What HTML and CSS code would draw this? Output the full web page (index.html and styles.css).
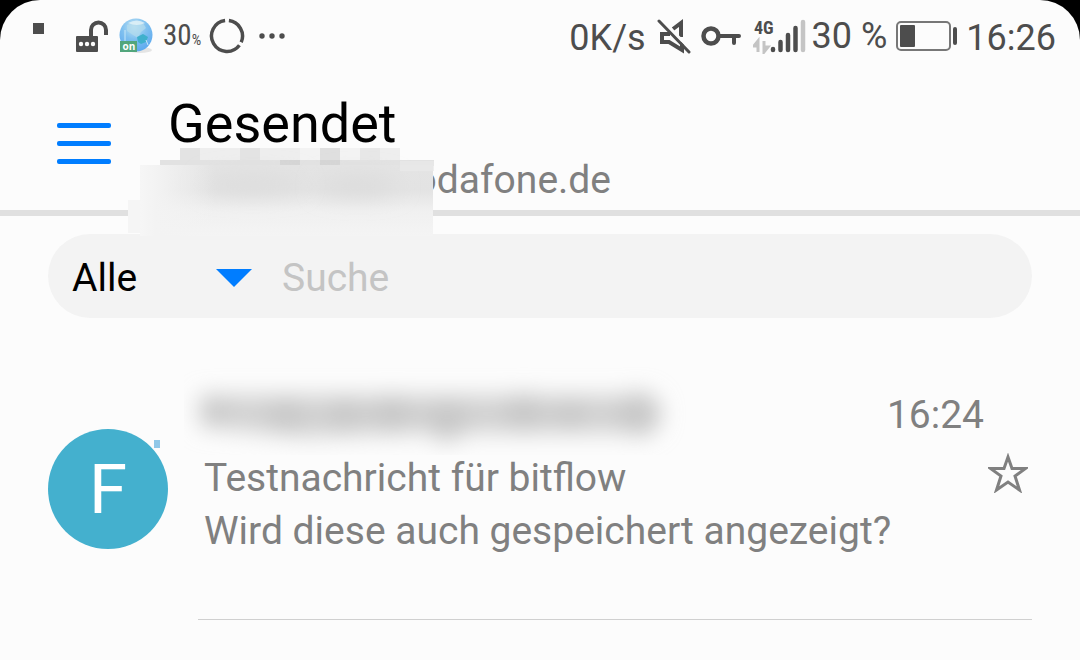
FILE: index.html
```html
<!DOCTYPE html>
<html lang="de">
<head>
    <meta charset="UTF-8">
    <meta name="viewport" content="width=device-width, initial-scale=1.0">
    <title>Gesendet</title>
    <link rel="stylesheet" href="styles.css">
</head>
<body>
    <div class="screen">
        <!-- Status bar -->
        <div class="status-bar">
            <div class="status-left">
                <span class="notice"></span>
                <svg class="lock" width="34" height="32" viewBox="0 0 34 32">
                    <path d="M16 16V10a7.500 7.500 0 0 1 15 0v5" fill="none" stroke="#4d4d4d" stroke-width="4"/>
                    <rect x="1" y="16" width="22" height="16" rx="1" fill="#4d4d4d"/>
                    <circle cx="6" cy="24" r="2.200" fill="#fcfcfc"/>
                    <circle cx="12" cy="24" r="2.200" fill="#fcfcfc"/>
                    <circle cx="18" cy="24" r="2.200" fill="#fcfcfc"/>
                </svg>
                <svg class="globe" width="36" height="36" viewBox="0 0 36 36">
                    <defs>
                        <radialGradient id="ball" cx="45%" cy="25%" r="75%">
                            <stop offset="0" stop-color="#c3e5f5"/>
                            <stop offset="0.500" stop-color="#7fc0ef"/>
                            <stop offset="1" stop-color="#5da9f0"/>
                        </radialGradient>
                    </defs>
                    <ellipse cx="21" cy="32" rx="12" ry="3" fill="#e4e4e4"/>
                    <circle cx="17" cy="17" r="16.500" fill="url(#ball)"/>
                    <path d="M8 7l7-3 9 1 3 5-5 4-3 6-5-3-6-4z" fill="#b4dced" opacity="0.700"/>
                    <path d="M18 19l6-3 5 3-2 5-5 2-3-2z" fill="#3fb0cc"/>
                    <path d="M9 5q9-5 17 0-8 4-17 0z" fill="#e4f3f8" opacity="0.800"/>
                    <path d="M6 12v11M27 22l2 5" stroke="#c7e7f8" fill="none"/>
                    <rect x="1" y="23" width="17" height="11" fill="#52a67c"/>
                    <text x="10" y="32" text-anchor="middle" class="globe-text">on</text>
                </svg>
                <span class="usage">30<small>%</small></span>
                <svg class="ring" width="36" height="36" viewBox="0 0 36 36" fill="none" stroke="#4d4d4d" stroke-width="3.500">
                    <path d="M19.900 2.600A15.500 15.500 0 0 1 32.200 24.200"/>
                    <path d="M30.400 27.300A15.500 15.500 0 1 1 16.100 2.600"/>
                </svg>
                <svg class="more" width="26" height="6" viewBox="0 0 26 6" fill="#4d4d4d">
                    <circle cx="3" cy="3" r="2.700"/>
                    <circle cx="13" cy="3" r="2.700"/>
                    <circle cx="23" cy="3" r="2.700"/>
                </svg>
            </div>
            <div class="status-right">
                <span class="speed">0K/s</span>
                <svg class="mute" width="34" height="36" viewBox="0 0 34 36" fill="none" stroke="#4d4d4d" stroke-width="4">
                    <path d="M13 16H5v8h7l13 8v-8"/>
                    <path d="M16 11l8-6v14"/>
                    <path d="M5 2l29 30" stroke="#fcfcfc" stroke-width="3"/>
                    <path d="M2 3l30 31" stroke-linecap="round" stroke-width="3"/>
                </svg>
                <svg class="key" width="40" height="22" viewBox="0 0 40 22" fill="none" stroke="#4d4d4d" stroke-width="4">
                    <circle cx="10" cy="11" r="7.500" stroke-width="4.500"/>
                    <path d="M18 11h20M33 11v7" stroke-linecap="round"/>
                </svg>
                <svg class="signal" width="53" height="36" viewBox="0 0 53 36">
                    <text x="1" y="16" class="signal-text">4G</text>
                    <path d="M5 34V23L1 28h5M11 23v11l4-5h-5" fill="none" stroke="#c4c4c4" stroke-width="3"/>
                    <g stroke="#4d4d4d" stroke-width="4.500" stroke-linecap="round">
                        <path d="M20 31v1M27.500 24v8M35 17v15M42.500 10v22"/>
                        <path d="M50 4v28" stroke="#c4c4c4"/>
                    </g>
                </svg>
                <span class="percent">30 %</span>
                <svg class="battery" width="62" height="30" viewBox="0 0 62 30">
                    <rect x="1" y="1" width="53" height="28" rx="4" fill="none" stroke="#777" stroke-width="2"/>
                    <rect x="4" y="4" width="15" height="22" rx="1" fill="#4d4d4d"/>
                    <rect x="57" y="6" width="4" height="18" rx="2" fill="#4d4d4d"/>
                </svg>
                <span class="clock">16:26</span>
            </div>
        </div>

        <!-- Header -->
        <header class="header">
            <button class="menu" aria-label="Menü"><span></span><span></span><span></span></button>
            <div class="folder">
                <h1>Gesendet</h1>
                <p class="account">vodafone.de</p>
                <svg class="account-mask" width="306" height="88" viewBox="0 0 306 88" aria-hidden="true">
                    <defs>
                        <linearGradient id="fade" x1="0" y1="0" x2="0" y2="1">
                            <stop offset="0" stop-color="#e4e4e4"/>
                            <stop offset="0.350" stop-color="#e3e3e3"/>
                            <stop offset="0.650" stop-color="#f0f0f0"/>
                            <stop offset="1" stop-color="#f4f4f4"/>
                        </linearGradient>
                        <linearGradient id="side">
                            <stop offset="0" stop-color="#f6f6f6"/>
                            <stop offset="0.200" stop-color="#f3f3f3"/>
                            <stop offset="1" stop-color="#f3f3f3" stop-opacity="0"/>
                        </linearGradient>
                        <filter id="soft" x="-50%" y="-150%" width="200%" height="400%">
                            <feGaussianBlur stdDeviation="11"/>
                        </filter>
                    </defs>
                    <path d="M52 0h20v12H52zM112 0h20v12h-20z" fill="#e3e3e3"/>
                    <path d="M72 0h40v12H72zM132 0h40v12h-40zM252 0h20v12h-20z" fill="#eee"/>
                    <path d="M172 0h20v12h-20zM212 0h20v12h-20z" fill="#f3f3f3"/>
                    <path d="M192 0h20v12h-20z" fill="#dfdfdf"/>
                    <path d="M232 0h20v12h-20z" fill="#e7e7e7"/>
                    <rect x="32" y="12" width="274" height="6" fill="#e2e2e2"/>
                    <path d="M152 12h20v6h-20zM192 12h20v6h-20z" fill="#d5d5d5"/>
                    <rect x="0" y="52" width="12" height="33" fill="#f5f5f5"/>
                    <rect x="12" y="17" width="293" height="71" fill="url(#fade)"/>
                    <ellipse cx="125" cy="36" rx="50" ry="9" fill="#dcdcdc" filter="url(#soft)"/>
                    <ellipse cx="230" cy="38" rx="40" ry="9" fill="#dadada" filter="url(#soft)"/>
                    <rect x="12" y="17" width="75" height="71" fill="url(#side)"/>
                    <rect x="272" y="13" width="34" height="10" fill="#eaeaea" opacity="0.700"/>
                </svg>
            </div>
        </header>

        <!-- Search -->
        <form class="search">
            <div class="filter">
                <select aria-label="Filter">
                    <option>Alle</option>
                </select>
                <svg class="arrow" width="36" height="18" viewBox="0 0 36 18"><path d="M0 0h36L18 18z" fill="#007dff"/></svg>
            </div>
            <input type="text" placeholder="Suche" aria-label="Suche">
        </form>

        <!-- Messages -->
        <main>
            <article class="message">
                <div class="avatar">F<span class="dot"></span></div>
                <div class="content">
                    <div class="line first">
                        <svg class="sender" width="510" height="92" viewBox="0 0 510 92" aria-hidden="true">
                            <filter id="blur" x="-20%" y="-100%" width="140%" height="300%">
                                <feGaussianBlur stdDeviation="11"/>
                            </filter>
                            <g filter="url(#blur)" fill="#c8c8c8">
                                <path d="M16 32h450v38H230L120 74 16 64z" fill="#d2d2d2"/>
                                <circle cx="30" cy="47" r="14"/>
                                <circle cx="102" cy="52" r="18"/>
                                <circle cx="161" cy="51" r="17"/>
                                <circle cx="208" cy="51" r="20"/>
                                <circle cx="263" cy="57" r="21"/>
                                <circle cx="340" cy="50" r="20"/>
                                <circle cx="386" cy="52" r="16"/>
                                <circle cx="455" cy="51" r="22"/>
                            </g>
                        </svg>
                        <time>16:24</time>
                    </div>
                    <div class="line">
                        <p>Testnachricht für bitflow</p>
                        <button class="star" aria-label="Markieren">
                            <svg width="40" height="40" viewBox="0 0 40 40">
                                <path d="M20 4l4 11.500h13.500L27 23l4.500 14L20 29 8.500 37 13 23 2.500 15.500H16z" fill="none" stroke="#808080" stroke-width="3"/>
                            </svg>
                        </button>
                    </div>
                    <div class="line">
                        <p>Wird diese auch gespeichert angezeigt?</p>
                    </div>
                </div>
            </article>
        </main>
    </div>
</body>
</html>
```
FILE: styles.css
```css
* {
    margin: 0;
    padding: 0;
    box-sizing: border-box;
}

body {
    background: #000;
    font-family: Roboto, sans-serif;
    font-size: 39px;
    color: #808080;
}

button {
    background: none;
    border: none;
    cursor: pointer;
}

svg {
    display: block;
    flex-shrink: 0;
}

.screen {
    min-height: 100vh;
    background: #fcfcfc;
    border-radius: 40px 40px 0 0;
    overflow: hidden;
}

/* Status bar */
.status-bar {
    display: flex;
    justify-content: space-between;
    height: 72px;
    padding: 0 24px 0 33px;
    color: #4d4d4d;
    font-size: 36px;
    line-height: 72px;
    white-space: nowrap;
}

.status-left,
.status-right {
    display: flex;
    align-items: center;
}

.notice {
    width: 11px;
    height: 11px;
    margin: 0 31px 16px 0;
    background: #4d4d4d;
}

.lock {
    margin-right: 10px;
}

.globe {
    margin-right: 8px;
}

.globe-text {
    font: bold 10px "Open Sans", sans-serif;
    fill: #fff;
}

.usage {
    width: 38px;
    margin-right: 8px;
    padding-top: 2px;
    font-family: "Roboto Condensed", Roboto, sans-serif;
    font-size: 29px;
}

.usage small {
    font-size: 15px;
}

.ring {
    margin-right: 14px;
}

.speed,
.clock {
    padding-top: 3px;
}

.mute {
    margin: 0 10px 0 11px;
}

.key {
    margin-right: 12px;
}

.signal {
    margin-right: 6px;
}

.signal-text {
    font: bold 18px "Roboto Condensed", Roboto, sans-serif;
    fill: #4d4d4d;
}

.battery {
    margin: 0 8px 0 9px;
}

/* Header */
.header {
    display: flex;
    height: 144px;
    border-bottom: 6px solid #e0e0e0;
}

.menu {
    display: flex;
    flex-direction: column;
    gap: 13px;
    width: 54px;
    height: 41px;
    margin: 51px 57px 0;
}

.menu span {
    width: 54px;
    height: 5px;
    border-radius: 2px;
    background: #007dff;
}

.folder {
    position: relative;
    padding-top: 20px;
}

h1 {
    color: #000;
    font-size: 54px;
    font-weight: 400;
    line-height: 64px;
}

.account {
    padding-left: 228px;
    line-height: 48px;
}

.account-mask {
    position: absolute;
    top: 76px;
    left: -40px;
}

/* Search */
.search {
    display: flex;
    height: 84px;
    margin: 18px 48px 0;
    padding: 0 24px;
    border-radius: 42px;
    background: #f3f3f3;
}

.filter {
    position: relative;
    width: 180px;
}

.filter select {
    appearance: none;
    width: 100%;
    height: 84px;
    padding-top: 3px;
    border: none;
    background: none;
    color: #000;
    font: inherit;
}

.arrow {
    position: absolute;
    top: 35px;
    right: 0;
    pointer-events: none;
}

.search input {
    flex: 1;
    min-width: 0;
    margin-left: 30px;
    padding-top: 3px;
    border: none;
    outline: none;
    background: none;
    font: inherit;
}

.search input::placeholder {
    color: #c4c4c4;
}

/* Messages */
.message {
    display: flex;
    gap: 30px;
    margin: 70px 48px 0;
}

.avatar {
    position: relative;
    flex-shrink: 0;
    width: 120px;
    height: 120px;
    margin-top: 41px;
    padding-top: 1px;
    border-radius: 50%;
    background: #44b0ce;
    color: #fff;
    font-size: 69px;
    line-height: 120px;
    text-align: center;
}

.dot {
    position: absolute;
    top: 11px;
    right: 8px;
    width: 6px;
    height: 8px;
    background: #90c8e8;
}

.content {
    flex: 1;
    padding: 1px 0 61px 6px;
    border-bottom: 1px solid #d0d0d0;
}

.line {
    display: flex;
    justify-content: space-between;
    line-height: 53px;
}

.first {
    position: relative;
    justify-content: flex-end;
    margin-bottom: 10px;
    padding-right: 48px;
}

.sender {
    position: absolute;
    top: -26px;
    left: -20px;
}

.star {
    height: 40px;
    margin: 1px 4px 0 0;
}
```
